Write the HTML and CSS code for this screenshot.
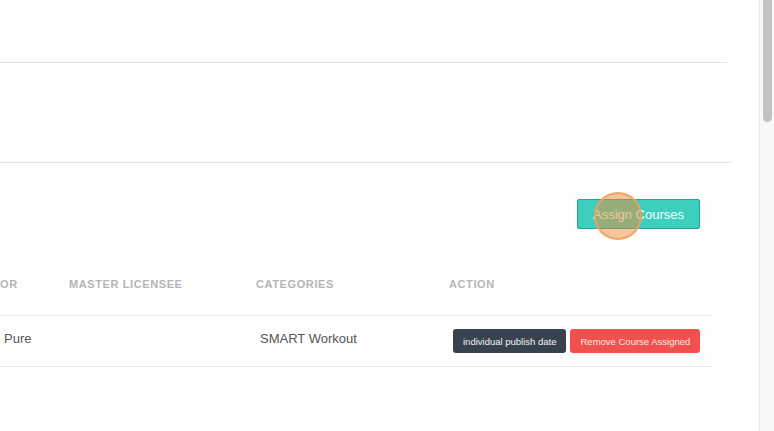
FILE: index.html
```html
<!DOCTYPE html>
<html lang="en">
<head>
<meta charset="utf-8">
<title>Courses</title>
<link rel="stylesheet" href="styles.css">
</head>
<body>
<div class="page">
  <main class="content">
    <div class="band band-top"></div>
    <div class="band band-mid"></div>

    <div class="toolbar">
      <button class="btn btn-assign" type="button">Assign Courses
        <span class="tap-ring"></span>
      </button>
    </div>

    <div class="table">
      <div class="th">OR</div>
      <div class="th">MASTER LICENSEE</div>
      <div class="th">CATEGORIES</div>
      <div class="th">ACTION</div>

      <div class="td td-text">Pure</div>
      <div class="td td-text"></div>
      <div class="td td-text">SMART Workout</div>
      <div class="td td-actions">
        <button class="btn btn-small btn-dark" type="button">individual publish date</button>
        <button class="btn btn-small btn-red" type="button">Remove Course Assigned</button>
      </div>
    </div>
  </main>

  <aside class="scrollbar">
    <div class="thumb"></div>
  </aside>
</div>
</body>
</html>
```

FILE: styles.css
```css
* {
  box-sizing: border-box;
}

html, body {
  margin: 0;
  padding: 0;
  background: #fefefe;
}

body {
  font-family: "Liberation Sans", Arial, sans-serif;
  color: #555;
}

.page {
  display: flex;
  height: 431px;
  overflow: hidden;
}

.content {
  flex: 1;
  min-width: 0;
}

/* header bands separated by thin rules */
.band {
  border-bottom: 1px solid #e4e4e4;
}

.band-top {
  height: 63px;
  width: 727px;
}

.band-mid {
  height: 100px;
  width: 731px;
}

.toolbar {
  display: flex;
  justify-content: flex-end;
  width: 700px;
  padding-top: 36px;
}

.btn {
  font-family: "Liberation Sans", Arial, sans-serif;
  border-radius: 2px;
  cursor: pointer;
}

.btn-assign {
  position: relative;
  width: 123px;
  height: 30px;
  padding: 0;
  background: #3ccfbd;
  border: 1px solid #27a494;
  color: #f4fffd;
  font-size: 13px;
}

/* click highlight over the button */
.tap-ring {
  position: absolute;
  left: 16px;
  top: -8px;
  width: 48px;
  height: 48px;
  border-radius: 50%;
  background: rgba(240, 140, 55, 0.5);
  border: 2px solid rgba(244, 160, 90, 0.85);
}

.table {
  display: grid;
  grid-template-columns: 69px 187px 193px 264px;
  width: 713px;
  margin-top: 46px;
}

.th {
  height: 41px;
  line-height: 18px;
  border-bottom: 1px solid #ebebeb;
  font-size: 11px;
  font-weight: bold;
  letter-spacing: 0.6px;
  color: #b5b5b5;
}

.td {
  height: 51px;
  border-bottom: 1px solid #ebebeb;
  display: flex;
  align-items: center;
}

.td-text {
  padding: 0 0 6px 4px;
  font-size: 13px;
  color: #555;
}

.td-actions {
  padding-left: 4px;
  gap: 4px;
}

.btn-small {
  height: 24px;
  padding: 0 10px;
  border: 0;
  border-radius: 3px;
  font-size: 9.5px;
}

.btn-dark {
  background: #37424e;
  color: #f2f4f6;
}

.btn-red {
  background: #f0514e;
  color: #fde9e8;
}

.scrollbar {
  width: 15px;
  flex: none;
  background: #f8f8f8;
  border-left: 1px solid #e8e8e8;
  padding: 0 2px 0 3px;
}

.thumb {
  height: 122px;
  background: #c2c2c2;
  border-radius: 0 0 5px 5px;
}
```
